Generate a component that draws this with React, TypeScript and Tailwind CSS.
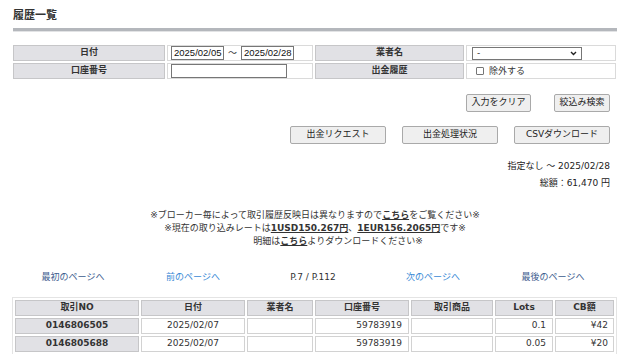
import React from "react";

const base = "font-['DejaVu_Sans','Noto_Sans_CJK_JP',sans-serif]";
const label =
  "h-[16px] border border-[#c6c6c8] bg-[#e1e1e5] flex items-center justify-center font-bold text-[9px] text-[#333]";
const valueCell = "h-[16px] border border-[#dadada] bg-white flex items-center";
const btn =
  "h-[18px] border border-[#a9a9a9] rounded-[2px] bg-[#efefef] text-[9px] text-[#222] flex items-center justify-center";

function Input({ w, value }: { w: string; value?: string }) {
  return (
    <div
      className={`${w} h-[14px] border border-[#767676] bg-white flex items-center pl-[2px] font-['Liberation_Sans',sans-serif] text-[9.5px] text-[#111] leading-none`}
    >
      {value}
    </div>
  );
}

const cols = "grid grid-cols-[124px_104px_66px_94px_82px_58px_59px] gap-x-[2px]";
const th =
  "h-[16px] border border-[#c6c6c8] bg-[#e1e1e5] flex items-center justify-center font-bold text-[9px] text-[#333]";
const tdGray =
  "h-[16px] border border-[#c6c6c8] bg-[#e1e1e5] flex items-center justify-center font-bold text-[9px] text-[#333]";
const td = "h-[16px] border border-[#d2d2d2] bg-white flex items-center text-[9px] text-[#333]";

const rows = [
  { no: "0146806505", date: "2025/02/07", acct: "59783919", lots: "0.1", cb: "¥42" },
  { no: "0146805688", date: "2025/02/07", acct: "59783919", lots: "0.05", cb: "¥20" },
];

export default function App() {
  return (
    <div className={`${base} w-[630px] h-[354px] overflow-hidden bg-white text-[#333] pl-[13px]`}>
      {/* title */}
      <div className="pt-[9px] text-[11px] leading-[13px] font-bold text-[#333]">履歴一覧</div>
      <div className="mt-[6px] w-[604px] h-[3px] bg-[#b4b7bc]" />
      <div className="w-[604px] h-[1px] bg-[#e2e3e5]" />

      {/* filter */}
      <div className="mt-[13px] grid grid-cols-[152px_146px_149px_150px] gap-[2px]">
        <div className={label}>日付</div>
        <div className={`${valueCell} pl-[3px]`}>
          <Input w="w-[53px]" value="2025/02/05" />
          <span className="mx-[4px] text-[9px] leading-none">～</span>
          <Input w="w-[53px]" value="2025/02/28" />
        </div>
        <div className={label}>業者名</div>
        <div className={`${valueCell} pl-[5px]`}>
          <div className="w-[110px] h-[13px] border border-[#767676] bg-white flex items-center justify-between px-[4px] text-[9px] leading-none">
            <span>-</span>
            <svg width="7" height="5" viewBox="0 0 7 5">
              <path d="M1 1 L3.5 3.5 L6 1" stroke="#222" strokeWidth="1.4" fill="none" />
            </svg>
          </div>
        </div>
        <div className={label}>口座番号</div>
        <div className={`${valueCell} pl-[3px]`}>
          <Input w="w-[116px]" />
        </div>
        <div className={label}>出金履歴</div>
        <div className={`${valueCell} pl-[9px]`}>
          <span className="w-[8px] h-[8px] border border-[#767676] rounded-[1px] bg-white" />
          <span className="ml-[5px] text-[9px] leading-none text-[#333]">除外する</span>
        </div>
      </div>

      {/* buttons */}
      <div className="mt-[15px] w-[597px] flex justify-end gap-[23px]">
        <div className={`${btn} w-[65px]`}>入力をクリア</div>
        <div className={`${btn} w-[56px]`}>絞込み検索</div>
      </div>
      <div className="mt-[14px] w-[597px] flex justify-end gap-[16px]">
        <div className={`${btn} w-[96px]`}>出金リクエスト</div>
        <div className={`${btn} w-[96px]`}>出金処理状況</div>
        <div className={`${btn} w-[96px]`}>CSVダウンロード</div>
      </div>

      {/* summary */}
      <div className="mt-[14px] w-[597px] text-right text-[9px] leading-[17px] text-[#222]">
        <div>指定なし ～ 2025/02/28</div>
        <div>総額：61,470 円</div>
      </div>

      {/* notes */}
      <div className="mt-[17px] w-[604px] text-center text-[9px] leading-[13px] text-[#333]">
        <div>
          ※ブローカー毎によって取引履歴反映日は異なりますので
          <span className="font-bold underline">こちら</span>をご覧ください※
        </div>
        <div>
          ※現在の取り込みレートは<span className="font-bold underline">1USD150.267円</span>、
          <span className="font-bold underline">1EUR156.2065円</span>です※
        </div>
        <div className="pl-[46px]">
          明細は<span className="font-bold underline">こちら</span>よりダウンロードください※
        </div>
      </div>

      {/* pagination */}
      <div className="mt-[22px] w-[600px] grid grid-cols-5 text-center text-[9px] leading-[14px]">
        <span className="text-[#3d5c8e]">最初のページへ</span>
        <span className="text-[#3a8ad6]">前のページへ</span>
        <span className="text-[#333]">P.7 / P.112</span>
        <span className="text-[#3a8ad6]">次のページへ</span>
        <span className="text-[#3d5c8e]">最後のページへ</span>
      </div>

      {/* table */}
      <div className="mt-[13px] -ml-[1px] w-[605px] border border-[#e4e4e4] p-[2px] flex flex-col gap-y-[2px]">
        <div className={cols}>
          <div className={th}>取引NO</div>
          <div className={th}>日付</div>
          <div className={th}>業者名</div>
          <div className={th}>口座番号</div>
          <div className={th}>取引商品</div>
          <div className={th}>Lots</div>
          <div className={th}>CB額</div>
        </div>
        {rows.map((r) => (
          <div key={r.no} className={cols}>
            <div className={tdGray}>{r.no}</div>
            <div className={`${td} justify-center`}>{r.date}</div>
            <div className={td} />
            <div className={`${td} justify-end pr-[6px]`}>{r.acct}</div>
            <div className={td} />
            <div className={`${td} justify-end pr-[6px]`}>{r.lots}</div>
            <div className={`${td} justify-end pr-[5px]`}>{r.cb}</div>
          </div>
        ))}
        <div className={cols}>
          <div className={tdGray} />
          <div className={td} />
          <div className={td} />
          <div className={td} />
          <div className={td} />
          <div className={td} />
          <div className={td} />
        </div>
      </div>
    </div>
  );
}
